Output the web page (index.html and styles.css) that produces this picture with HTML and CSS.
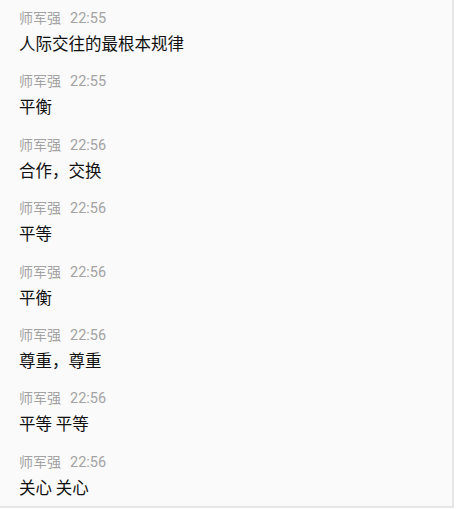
FILE: index.html
```html
<!DOCTYPE html>
<html lang="zh-CN">
<head>
    <meta charset="UTF-8">
    <title>聊天记录</title>
    <link rel="stylesheet" href="styles.css">
</head>
<body>
    <div class="chat-panel">
        <div class="msg">
            <div class="msg-meta"><span class="msg-name">师军强</span><span class="msg-time">22:55</span></div>
            <div class="msg-text">人际交往的最根本规律</div>
        </div>
        <div class="msg">
            <div class="msg-meta"><span class="msg-name">师军强</span><span class="msg-time">22:55</span></div>
            <div class="msg-text">平衡</div>
        </div>
        <div class="msg">
            <div class="msg-meta"><span class="msg-name">师军强</span><span class="msg-time">22:56</span></div>
            <div class="msg-text">合作，交换</div>
        </div>
        <div class="msg">
            <div class="msg-meta"><span class="msg-name">师军强</span><span class="msg-time">22:56</span></div>
            <div class="msg-text">平等</div>
        </div>
        <div class="msg">
            <div class="msg-meta"><span class="msg-name">师军强</span><span class="msg-time">22:56</span></div>
            <div class="msg-text">平衡</div>
        </div>
        <div class="msg">
            <div class="msg-meta"><span class="msg-name">师军强</span><span class="msg-time">22:56</span></div>
            <div class="msg-text">尊重，尊重</div>
        </div>
        <div class="msg">
            <div class="msg-meta"><span class="msg-name">师军强</span><span class="msg-time">22:56</span></div>
            <div class="msg-text">平等 平等</div>
        </div>
        <div class="msg">
            <div class="msg-meta"><span class="msg-name">师军强</span><span class="msg-time">22:56</span></div>
            <div class="msg-text">关心 关心</div>
        </div>
    </div>
</body>
</html>
```

FILE: styles.css
```css
body {
    margin: 0;
    background-color: #fff;
    font-family: "Noto Sans CJK SC", "Noto Sans", sans-serif;
}
.chat-panel {
    width: 454px;
    height: 508px;
    box-sizing: border-box;
    padding: 8px 0 0 19px;
    background-color: #fafafa;
    border-right: 2px solid #e6e6e6;
    border-bottom: 2px solid #e6e6e6;
    overflow: hidden;
}
.msg {
    margin-bottom: 17.4px;
}
.msg-meta {
    height: 20px;
    font-family: Roboto, "Noto Sans CJK SC", sans-serif;
    font-size: 14px;
    line-height: 20px;
    color: #a3a3a3;
}
.msg-time {
    margin-left: 9px;
    font-size: 14.5px;
}
.msg-text {
    height: 22px;
    margin-top: 4px;
    font-size: 16.5px;
    line-height: 22px;
    color: #111;
}
```
